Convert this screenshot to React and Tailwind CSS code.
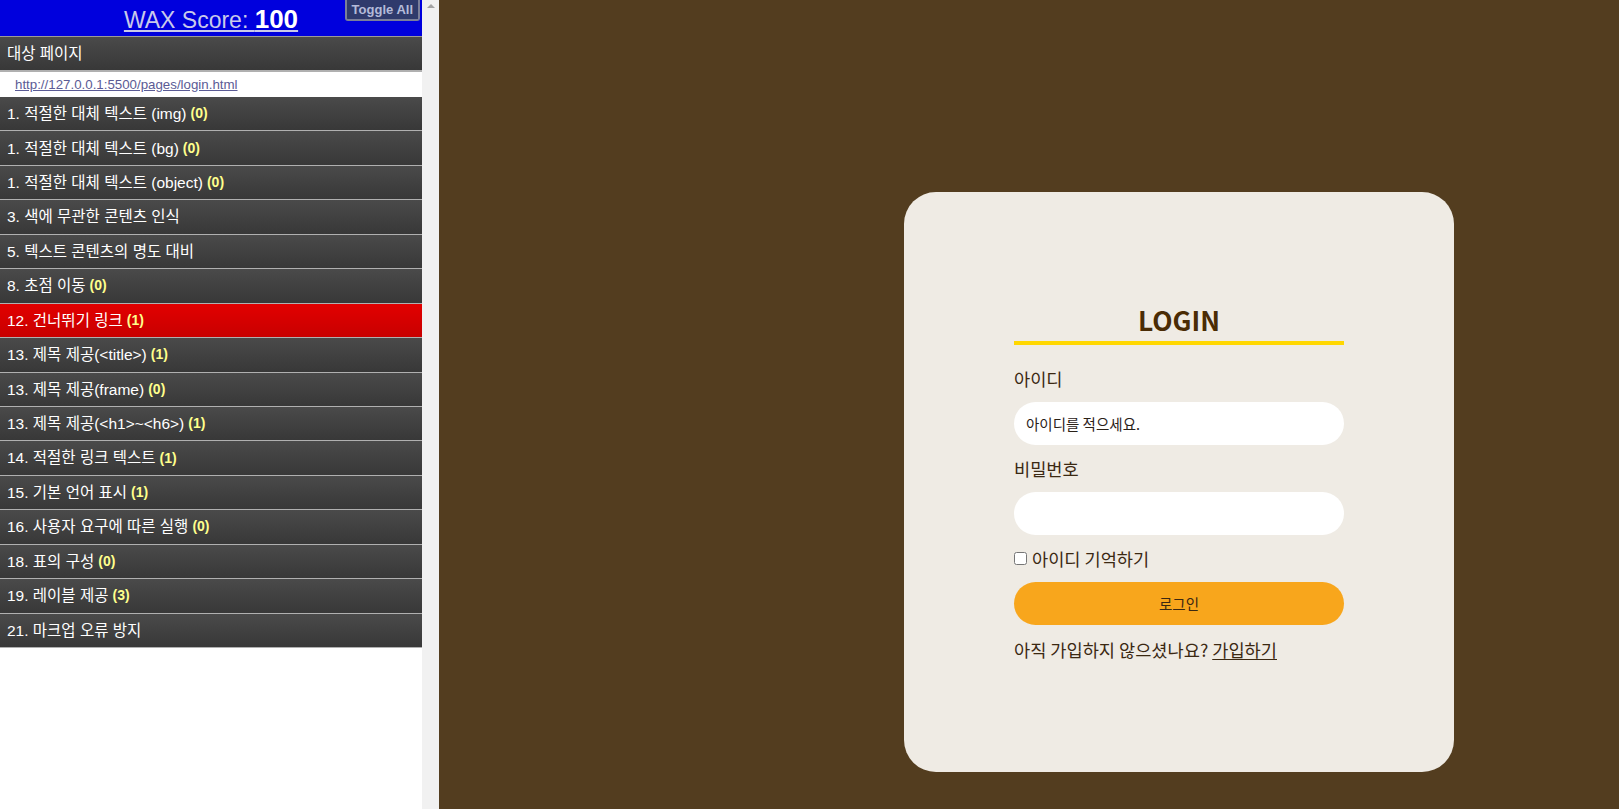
import React from "react";

const items = [
  { label: "1. 적절한 대체 텍스트 (img)", count: 0 },
  { label: "1. 적절한 대체 텍스트 (bg)", count: 0 },
  { label: "1. 적절한 대체 텍스트 (object)", count: 0 },
  { label: "3. 색에 무관한 콘텐츠 인식" },
  { label: "5. 텍스트 콘텐츠의 명도 대비" },
  { label: "8. 초점 이동", count: 0 },
  { label: "12. 건너뛰기 링크", count: 1, error: true },
  { label: "13. 제목 제공(<title>)", count: 1 },
  { label: "13. 제목 제공(frame)", count: 0 },
  { label: "13. 제목 제공(<h1>~<h6>)", count: 1 },
  { label: "14. 적절한 링크 텍스트", count: 1 },
  { label: "15. 기본 언어 표시", count: 1 },
  { label: "16. 사용자 요구에 따른 실행", count: 0 },
  { label: "18. 표의 구성", count: 0 },
  { label: "19. 레이블 제공", count: 3 },
  { label: "21. 마크업 오류 방지" },
];

function WaxPanel() {
  return (
    <div className="w-[422px] shrink-0 bg-white font-['Liberation_Sans','Noto_Sans_CJK_KR',sans-serif]">
      {/* score header */}
      <div className="relative h-[36px] bg-[#0000dd] flex items-center justify-center">
        <a href="#" className="text-[#c9c9ea] underline decoration-[#c9c9ea] text-[23px] leading-none mt-[1px]">
          WAX Score: <b className="text-white text-[26px]">100</b>
        </a>
        <button className="absolute top-0 right-[2px] h-[21px] px-[5px] bg-[#2f3a6c] border-2 border-t-0 border-[#7a7f99] rounded-b-[3px] text-[13px] font-bold text-[#b4bbd9] leading-none">
          Toggle All
        </button>
      </div>

      <div className="h-[34px] border-t border-[#9a9a9a] bg-gradient-to-b from-[#4a4a4a] to-[#383838] flex items-center px-[7px] text-[15.5px] text-white">
        대상 페이지
      </div>
      <div className="h-[27px] border-t-2 border-[#b0b0b0] flex items-center pl-[15px]">
        <a href="#" className="text-[13.3px] text-[#5b5b95] underline">
          http://127.0.0.1:5500/pages/login.html
        </a>
      </div>

      {items.map((it) => (
        <div
          key={it.label}
          className={
            it.error
              ? "h-[34.45px] border-b-[1.5px] border-[#b0b0b0] bg-gradient-to-b from-[#e20000] to-[#c80000] flex items-center px-[7px] text-[15.5px] text-white"
              : "h-[34.45px] border-b-[1.5px] border-[#b0b0b0] bg-gradient-to-b from-[#4a4a4a] to-[#383838] flex items-center px-[7px] text-[15.5px] text-white"
          }
        >
          <span>{it.label}</span>
          {it.count !== undefined && (
            <span className="ml-[4px] text-[14px] font-bold text-[#ffff8c]">({it.count})</span>
          )}
        </div>
      ))}
    </div>
  );
}

function LoginCard() {
  return (
    <div className="w-[550px] h-[580px] bg-[#efebe4] rounded-[32px] pt-[110px] px-[110px] font-['Noto_Sans_CJK_KR','Noto_Sans',sans-serif] text-[#3b2812]">
      <h1 className="text-[26.4px] font-bold leading-[36px] text-center text-[#4a2c05] pb-[3px] border-b-4 border-[#ffd700]">
        LOGIN
      </h1>
      <div className="mt-[20px] flex flex-col gap-[10px]">
        <label className="text-[17.6px] leading-[27px]">아이디</label>
        <input
          type="text"
          placeholder="아이디를 적으세요."
          className="h-[43px] w-full rounded-full bg-white px-[12px] text-[14.5px] outline-none placeholder:text-[#2a2118]"
        />
        <label className="text-[17.6px] leading-[27px]">비밀번호</label>
        <input
          type="password"
          className="h-[43px] w-full rounded-full bg-white px-[12px] text-[15px] outline-none"
        />
        <label className="flex items-center gap-[5px] text-[17.6px] leading-[27px]">
          <input type="checkbox" className="w-[13px] h-[13px] m-0" />
          아이디 기억하기
        </label>
        <button className="h-[43px] w-full rounded-full bg-[#f8a61c] text-[14.5px] text-[#3b2812]">
          로그인
        </button>
        <p className="text-[17.6px] leading-[27px] mt-[1px]">
          아직 가입하지 않으셨나요?{" "}
          <a href="#" className="underline underline-offset-2">
            가입하기
          </a>
        </p>
      </div>
    </div>
  );
}

export default function App() {
  return (
    <div className="flex h-[809px] w-[1619px] overflow-hidden">
      <WaxPanel />
      {/* scrollbar of the panel */}
      <div className="w-[17px] shrink-0 bg-[#f1f1f1] flex justify-center pt-[4px]">
        <span className="w-0 h-0 border-x-[4px] border-x-transparent border-b-[4px] border-b-[#a3a3a3]" />
      </div>
      <main className="flex-1 bg-[#533d1f] pl-[465px] pt-[192px]">
        <LoginCard />
      </main>
    </div>
  );
}
